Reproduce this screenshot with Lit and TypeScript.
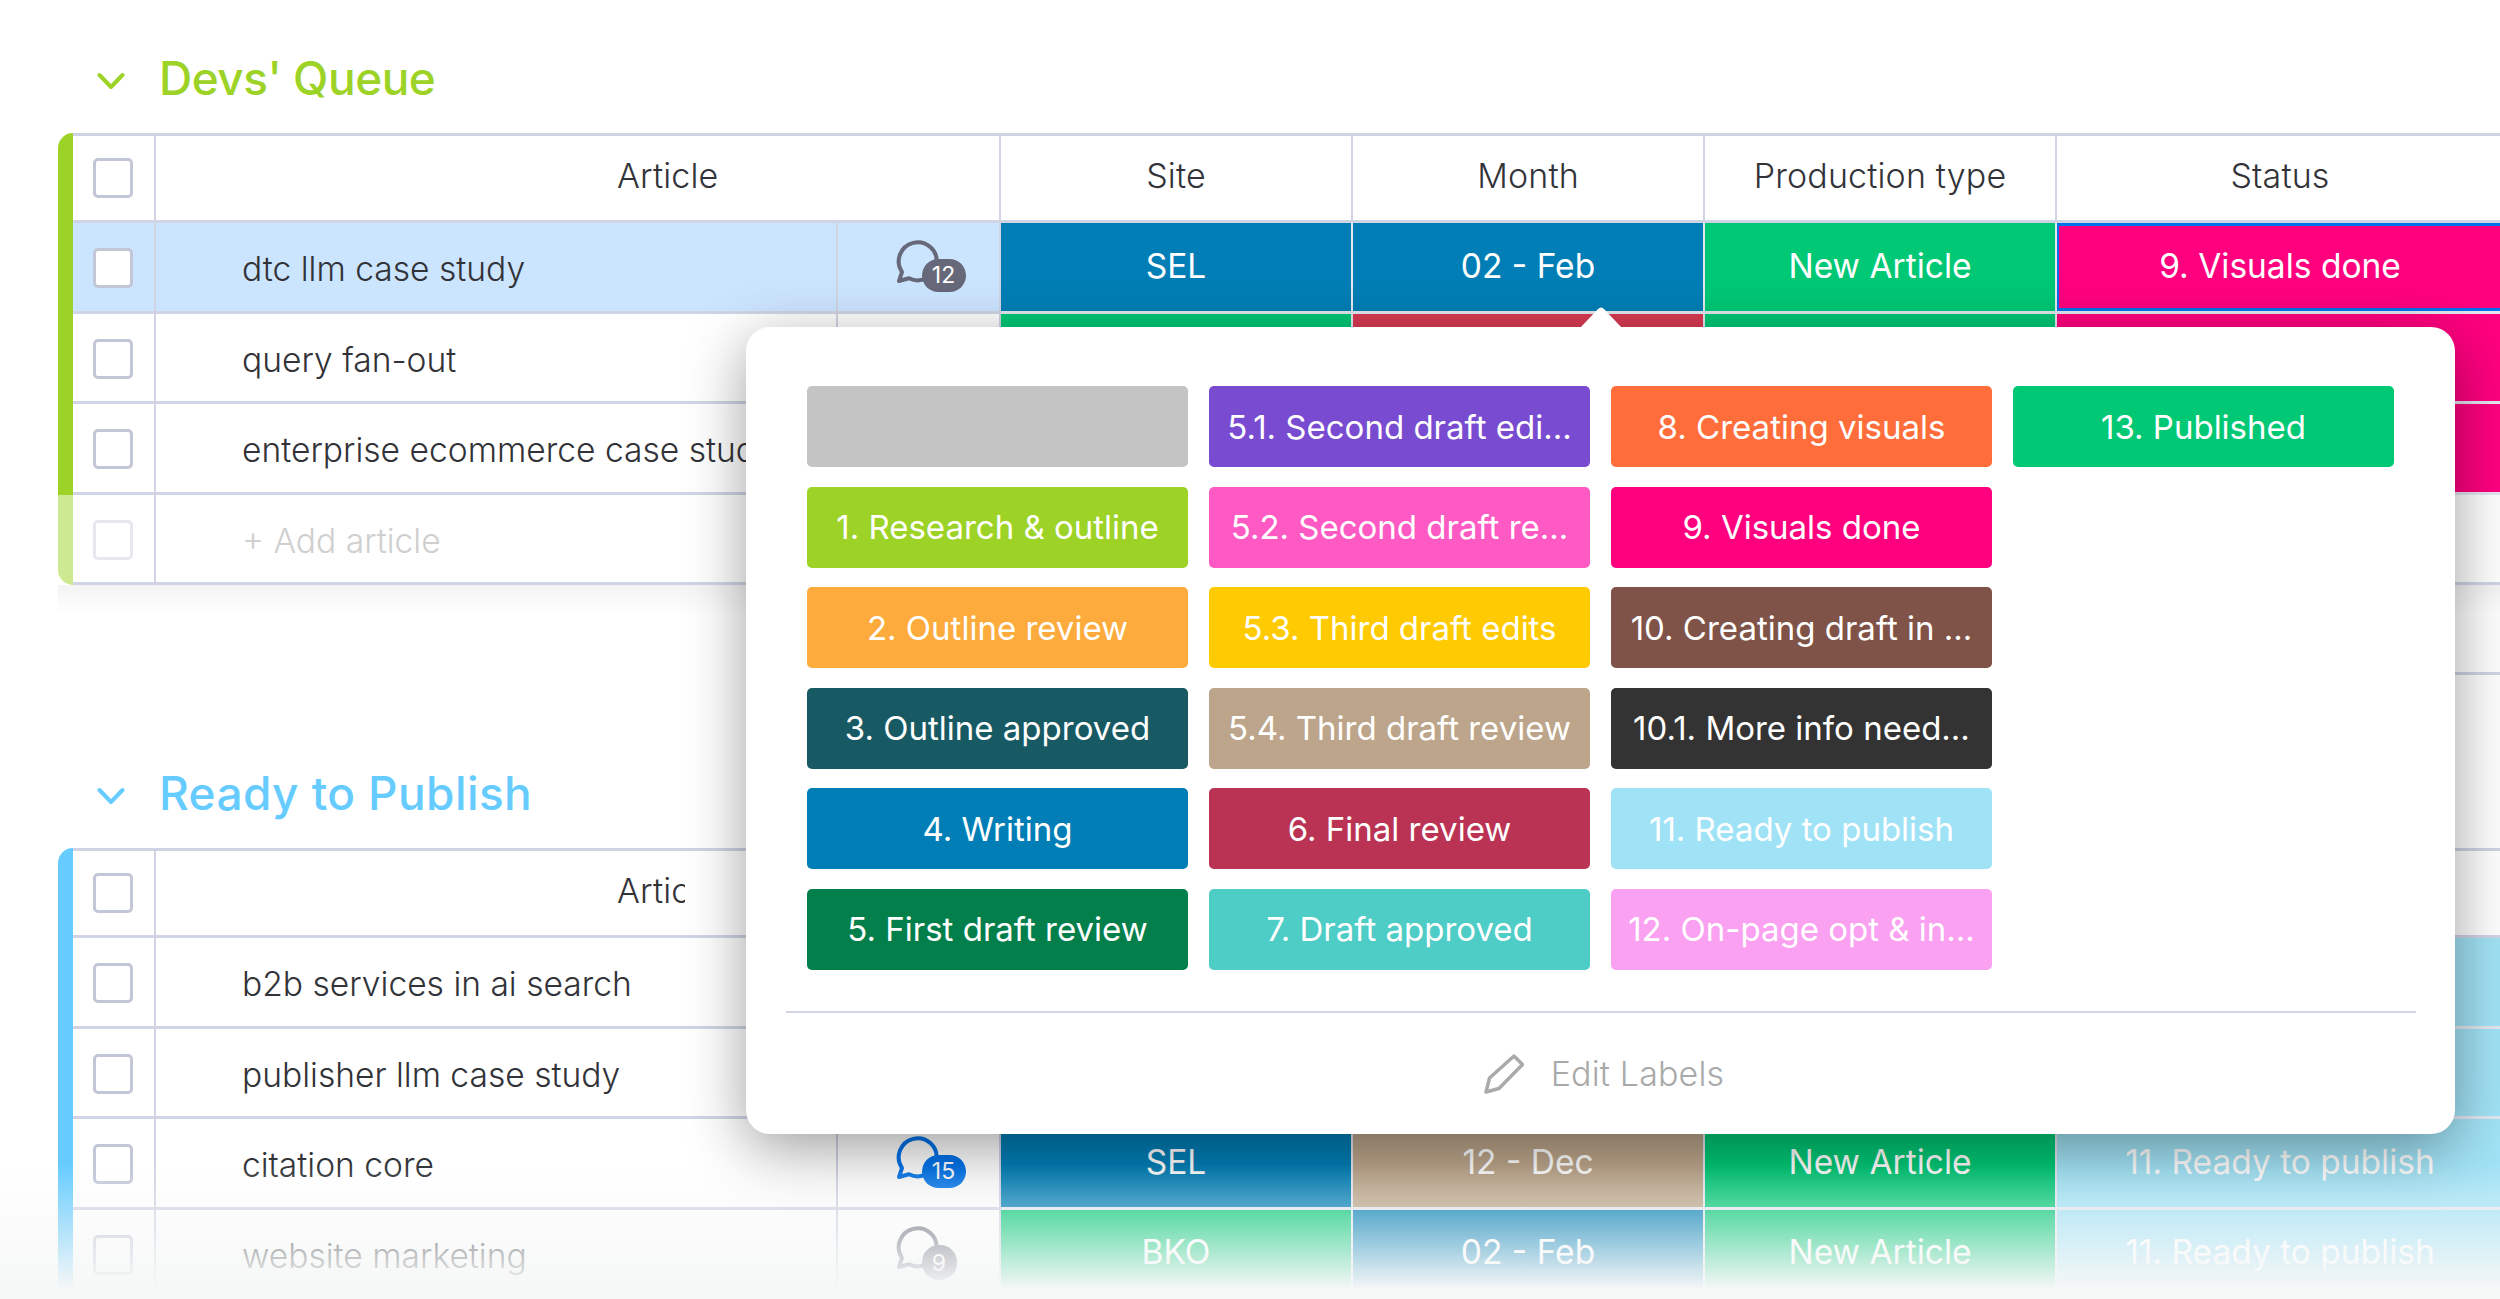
import { LitElement, html, css, nothing } from "lit";
import { customElement } from "lit/decorators.js";

type Row = {
  name?: string;
  selected?: boolean;
  add?: boolean;
  comments?: number;
  commentBlue?: boolean;
  cells: { text?: string; color?: string; active?: boolean }[];
};

const BLUE = "#007eb5";
const GREEN = "#00c875";
const PINK = "#ff007f";
const RED = "#d83a52";
const SKY = "#a1e3f6";
const TAN = "#bca58a";

const LABELS: { text: string; color: string }[] = [
  { text: "", color: "#c4c4c4" },
  { text: "1. Research & outline", color: "#9cd326" },
  { text: "2. Outline review", color: "#fdab3d" },
  { text: "3. Outline approved", color: "#175a63" },
  { text: "4. Writing", color: BLUE },
  { text: "5. First draft review", color: "#037f4c" },
  { text: "5.1. Second draft edi...", color: "#784bd1" },
  { text: "5.2. Second draft re...", color: "#ff5ac4" },
  { text: "5.3. Third draft edits", color: "#ffcb00" },
  { text: "5.4. Third draft review", color: TAN },
  { text: "6. Final review", color: "#bb3354" },
  { text: "7. Draft approved", color: "#4eccc6" },
  { text: "8. Creating visuals", color: "#ff6d3b" },
  { text: "9. Visuals done", color: PINK },
  { text: "10. Creating draft in ...", color: "#7f5347" },
  { text: "10.1. More info need...", color: "#333333" },
  { text: "11. Ready to publish", color: SKY },
  { text: "12. On-page opt & in...", color: "#faa1f1" },
  { text: "13. Published", color: GREEN },
];

const DEVS: Row[] = [
  {
    name: "dtc llm case study",
    selected: true,
    comments: 12,
    cells: [
      { text: "SEL", color: BLUE },
      { text: "02 - Feb", color: BLUE },
      { text: "New Article", color: GREEN },
      { text: "9. Visuals done", color: PINK, active: true },
    ],
  },
  {
    name: "query fan-out",
    cells: [{ color: GREEN }, { color: RED }, { color: GREEN }, { color: PINK }],
  },
  {
    name: "enterprise ecommerce case study",
    cells: [{ color: BLUE }, { color: BLUE }, { color: GREEN }, { color: PINK }],
  },
  { name: "+ Add article", add: true, cells: [{}, {}, {}, {}] },
];

const READY: Row[] = [
  {
    name: "b2b services in ai search",
    cells: [{ color: BLUE }, { color: TAN }, { color: GREEN }, { color: SKY }],
  },
  {
    name: "publisher llm case study",
    cells: [{ color: BLUE }, { color: TAN }, { color: GREEN }, { color: SKY }],
  },
  {
    name: "citation core",
    comments: 15,
    commentBlue: true,
    cells: [
      { text: "SEL", color: BLUE },
      { text: "12 - Dec", color: TAN },
      { text: "New Article", color: GREEN },
      { text: "11. Ready to publish", color: SKY },
    ],
  },
  {
    name: "website marketing",
    comments: 9,
    cells: [
      { text: "BKO", color: GREEN },
      { text: "02 - Feb", color: BLUE },
      { text: "New Article", color: GREEN },
      { text: "11. Ready to publish", color: SKY },
    ],
  },
];

@customElement("app-root")
export class AppRoot extends LitElement {
  static styles = css`
    :host {
      display: block;
      position: relative;
      width: 2500px;
      height: 1299px;
      overflow: hidden;
      background: #fff;
      font-family: Inter, "Liberation Sans", sans-serif;
      font-size: 34px;
      letter-spacing: 0.15px;
      font-weight: 300;
      color: #323338;
    }
    .group {
      padding-left: 58px;
    }
    .group.second {
      margin-top: 63px;
    }
    .group.first {
      padding-top: 23px;
    }
    .title {
      height: 110px;
      display: flex;
      align-items: center;
      gap: 34px;
      padding-left: 39px;
      font-size: 46px;
      font-weight: 500;
    }
    .first .title {
      letter-spacing: -0.5px;
    }
    .second .title {
      letter-spacing: 0.4px;
    }
    .title svg {
      width: 28px;
      height: 18px;
      margin-top: 6px;
      flex: none;
    }
    .table {
      display: flex;
    }
    .bar {
      width: 15px;
      flex: none;
      display: flex;
      flex-direction: column;
      border-radius: 16px 0 0 16px;
      overflow: hidden;
    }
    .bar .main {
      flex: 1;
    }
    .bar .faded {
      height: 90px;
      opacity: 0.5;
    }
    .body {
      border-top: 3px solid #cfd3e3;
    }
    .row {
      display: grid;
      grid-template-columns: 83px 682px 163px 352px 352px 352px 448px;
      height: 90.5px;
    }
    .row.header {
      height: 87px;
    }
    .row.header .cell {
      padding-bottom: 5px;
    }
    .cell {
      box-sizing: border-box;
      display: flex;
      align-items: center;
      justify-content: center;
      border-right: 2px solid #d0d4e4;
      border-bottom: 3px solid #d0d4e4;
      white-space: nowrap;
      overflow: hidden;
      min-width: 0;
      padding-bottom: 2px;
    }
    .row.selected .cell.plain {
      background: #cce5ff;
    }
    .box {
      box-sizing: border-box;
      width: 40px;
      height: 40px;
      margin: 4.5px 0 0 -2px;
      border: 3px solid #c3c6d6;
      border-radius: 5px;
      background: #fff;
    }
    .add .box {
      opacity: 0.4;
    }
    .name {
      justify-content: flex-start;
      padding-left: 86px;
      padding-top: 6px;
      font-size: 33.6px;
      letter-spacing: 0;
    }
    .add .name {
      color: #cfcfcf;
    }
    .head-article {
      grid-column: span 2;
      justify-content: flex-start;
      padding-left: 461px;
    }
    .clip {
      display: block;
      width: 68px;
      overflow: hidden;
    }
    .color {
      color: #fff;
      font-weight: 400;
      font-size: 33.5px;
      letter-spacing: 0;
      border-right-color: #e4e7f0;
      border-bottom-color: #e4e7f0;
    }
    .color.active {
      box-shadow: inset 0 3px #0073ea, inset 0 -3px #0073ea, inset 2px 0 #0073ea;
    }
    .comment {
      position: relative;
      width: 72px;
      height: 56px;
      margin-left: 26px;
      margin-top: 2px;
    }
    .comment svg {
      position: absolute;
      left: 0;
      top: 0;
      width: 44px;
      height: 46px;
      fill: none;
      stroke: #676879;
      stroke-width: 4;
      stroke-linejoin: round;
      stroke-linecap: round;
    }
    .comment.blue svg {
      stroke: #0073ea;
    }
    .badge {
      position: absolute;
      left: 26px;
      top: 20px;
      height: 33px;
      width: 44px;
      border-radius: 17px;
      background: #676879;
      color: #fff;
      font-size: 23px;
      font-weight: 400;
      display: flex;
      align-items: center;
      justify-content: center;
    }
    .comment.blue .badge {
      background: #0073ea;
    }
    .badge.round {
      width: 35px;
      height: 35px;
    }
    .foot {
      height: 90px;
      box-sizing: border-box;
      padding-left: 943px;
      background: linear-gradient(#f4f4f4, #fff) 0 0 / 100% 30px no-repeat;
    }
    .foot .line {
      height: 90px;
      width: 1600px;
      box-sizing: border-box;
      border-bottom: 3px solid #d0d4e4;
    }
    .fade {
      position: absolute;
      left: 0;
      right: 0;
      bottom: 0;
      height: 135px;
      background: linear-gradient(rgba(246, 247, 247, 0), #f6f7f7 93%);
    }
    .popover {
      position: absolute;
      left: 746px;
      top: 327px;
      width: 1709px;
      height: 807px;
      box-sizing: border-box;
      padding: 59px 60px 0 61px;
      background: #fff;
      border-radius: 24px;
      box-shadow: 0 15px 60px rgba(0, 0, 0, 0.38);
      display: flex;
      flex-direction: column;
    }
    .arrow {
      position: absolute;
      left: 834px;
      top: -20px;
      width: 42px;
      height: 21px;
      fill: #fff;
    }
    .labels {
      display: grid;
      grid-auto-flow: column;
      grid-template-rows: repeat(6, 81px);
      grid-template-columns: repeat(4, 381px);
      gap: 19.5px 21px;
    }
    .label {
      border-radius: 5px;
      color: #fff;
      font-weight: 400;
      font-size: 33px;
      letter-spacing: 0;
      display: flex;
      align-items: center;
      justify-content: center;
      white-space: nowrap;
      overflow: hidden;
    }
    .divider {
      height: 2.5px;
      background: #d0d4e4;
      margin: 41px -21px 0;
    }
    .edit {
      flex: 1;
      display: flex;
      align-items: center;
      justify-content: center;
      gap: 27px;
      padding-left: 6px;
      color: #a9a9a9;
    }
    .edit svg {
      width: 40px;
      height: 40px;
      fill: none;
      stroke: #aaaaaa;
      stroke-width: 3.5;
      stroke-linejoin: round;
    }
  `;

  private comment(r: Row) {
    if (r.comments === undefined) return nothing;
    const round = r.comments < 10;
    return html`<div class="comment ${r.commentBlue ? "blue" : ""}">
      <svg viewBox="0 0 44 46"><path d="M6 33A19 19 0 1 1 13 39.2L3 42Z" /></svg>
      <span class="badge ${round ? "round" : ""}">${r.comments}</span>
    </div>`;
  }

  private row(r: Row) {
    return html`<div class="row ${r.selected ? "selected" : ""} ${r.add ? "add" : ""}">
      <div class="cell plain"><span class="box"></span></div>
      <div class="cell plain name">${r.name}</div>
      <div class="cell plain">${this.comment(r)}</div>
      ${r.cells.map((c) =>
        c.color
          ? html`<div class="cell color ${c.active ? "active" : ""}" style="background:${c.color}">
              ${c.text ?? ""}
            </div>`
          : html`<div class="cell plain"></div>`
      )}
    </div>`;
  }

  private group(
    title: string,
    color: string,
    rows: Row[],
    cls: string,
    clipped: boolean,
    extras: boolean
  ) {
    return html`<section class="group ${cls}">
      <div class="title" style="color:${color}">
        <svg viewBox="0 0 28 18" fill="none" stroke="${color}" stroke-width="4" stroke-linecap="round" stroke-linejoin="round">
          <path d="M2.5 3 14 15 25.5 3" />
        </svg>
        <span>${title}</span>
      </div>
      <div class="table">
        <div class="bar">
          <div class="main" style="background:${color}"></div>
          ${extras ? html`<div class="faded" style="background:${color}"></div>` : nothing}
        </div>
        <div class="body">
          <div class="row header">
            <div class="cell"><span class="box"></span></div>
            <div class="cell head-article">
              ${clipped ? html`<span class="clip">Article</span>` : "Article"}
            </div>
            ${clipped
              ? html`<div class="cell"></div><div class="cell"></div><div class="cell"></div><div class="cell"></div>`
              : html`<div class="cell">Site</div><div class="cell">Month</div><div class="cell">Production type</div><div class="cell">Status</div>`}
          </div>
          ${rows.map((r) => this.row(r))}
        </div>
      </div>
      ${extras ? html`<div class="foot"><div class="line"></div></div>` : nothing}
    </section>`;
  }

  render() {
    return html`
      ${this.group("Devs' Queue", "#9cd326", DEVS, "first", false, true)}
      ${this.group("Ready to Publish", "#66ccff", READY, "second", true, false)}
      <div class="fade"></div>
      <div class="popover">
        <svg class="arrow" viewBox="0 0 42 21"><path d="M0 21 18 2Q21-1 24 2L42 21Z" /></svg>
        <div class="labels">
          ${LABELS.map(
            (l) => html`<div class="label" style="background:${l.color}">${l.text}</div>`
          )}
        </div>
        <div class="divider"></div>
        <div class="edit">
          <svg viewBox="0 0 40 40"><path d="M2 38 5.500 24 30 2 38.500 10.500 15 34.500Z" /></svg>
          <span>Edit Labels</span>
        </div>
      </div>
    `;
  }
}
